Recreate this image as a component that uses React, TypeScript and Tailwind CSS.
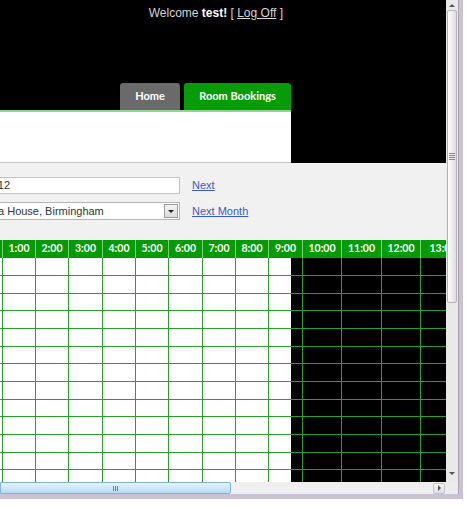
import React from 'react';

const hours = ['0:00', '1:00', '2:00', '3:00', '4:00', '5:00', '6:00', '7:00', '8:00', '9:00', '10:00', '11:00', '12:00', '13:00'];
const rowHeights = ['h-[18px]', 'h-[18px]', 'h-[17px]', 'h-[18px]', 'h-[18px]', 'h-[17px]', 'h-[18px]', 'h-[18px]', 'h-[17px]', 'h-[18px]', 'h-[18px]', 'h-[17px]', 'h-[18px]'];

function Timetable() {
  return (
    <div className="-ml-[30px] grid w-max grid-cols-[33px_33px_33px_34px_33px_33px_34px_33px_33px_34px_39px_40px_39px_45px]">
      {/* hour header */}
      {hours.map((h) => (
        <div
          key={h}
          className="flex h-[18px] items-center justify-center border-r border-[#7ccf7c] bg-[#049b04] font-['Lato',sans-serif] text-[10.5px] font-bold text-white"
        >
          {h}
        </div>
      ))}
      {/* empty booking slots */}
      {rowHeights.map((rh, r) =>
        hours.map((h) => (
          <div key={`${r}-${h}`} className={`${rh} border-r border-b border-[#2a9e2a]`} />
        ))
      )}
    </div>
  );
}

function VScrollbar() {
  return (
    <div className="flex h-[482px] w-[12px] flex-col bg-[#e9e9e9]">
      <div className="flex h-[10px] items-center justify-center">
        <div className="h-0 w-0 border-x-[3px] border-b-[3px] border-x-transparent border-b-[#555]" />
      </div>
      <div className="mx-[1px] flex h-[293px] items-center justify-center rounded-[2px] border border-[#b4b4b4] bg-gradient-to-r from-[#fdfdfd] to-[#dcdcdc]">
        <div className="flex flex-col gap-[1px]">
          <div className="h-[1px] w-[6px] bg-[#8a8a8a]" />
          <div className="h-[1px] w-[6px] bg-[#8a8a8a]" />
          <div className="h-[1px] w-[6px] bg-[#8a8a8a]" />
          <div className="h-[1px] w-[6px] bg-[#8a8a8a]" />
        </div>
      </div>
      <div className="flex-1" />
      <div className="flex h-[14px] items-center justify-center pb-[4px]">
        <div className="h-0 w-0 border-x-[3px] border-t-[3px] border-x-transparent border-t-[#555]" />
      </div>
    </div>
  );
}

function HScrollbar() {
  return (
    <div className="flex h-[12px] w-[446px] items-center bg-[#efefef]">
      <div className="flex h-[12px] w-[231px] items-center justify-center rounded-r-[2px] border border-[#7fb2d8] bg-gradient-to-b from-[#e6f3fc] to-[#b7daf2]">
        <div className="flex gap-[1px]">
          <div className="h-[5px] w-[1px] bg-[#5b86a8]" />
          <div className="h-[5px] w-[1px] bg-[#5b86a8]" />
          <div className="h-[5px] w-[1px] bg-[#5b86a8]" />
        </div>
      </div>
      <div className="flex-1" />
      <div className="mr-[1px] flex h-[11px] w-[12px] items-center justify-center rounded-[2px] border border-[#c4c4c4] bg-gradient-to-b from-[#f7f7f7] to-[#dedede]">
        <div className="h-0 w-0 border-y-[3px] border-l-[3px] border-y-transparent border-l-[#555]" />
      </div>
    </div>
  );
}

export default function App() {
  return (
    <div className="h-[507px] w-[474px] overflow-hidden bg-white">
      {/* browser window frame */}
      <div className="flex w-[463px] flex-col border-b-[5px] border-[#c8c2d4]">
        <div className="flex">
          <div className="flex w-[446px] flex-col">
            {/* page viewport (scrolled sideways) */}
            <div className="h-[482px] w-[446px] overflow-hidden bg-black">
              {/* header */}
              <div className="flex h-[110px] w-[291px] flex-col">
                <div className="pt-[6px] pr-[8px] text-right font-['Liberation_Sans',sans-serif] text-[12px] leading-[15px] text-[#d6d6d6]">
                  Welcome <b className="text-white">test!</b> [ <span className="underline">Log Off</span> ]
                </div>
                <div className="mt-auto flex justify-end gap-[4px] font-['Lato',sans-serif] text-[11px] font-bold text-white">
                  <div className="flex h-[27px] w-[60px] items-center justify-center rounded-t-[3px] bg-[#6a6a6a]">Home</div>
                  <div className="flex h-[27px] w-[107px] items-center justify-center rounded-t-[3px] bg-[#069c06]">Room Bookings</div>
                </div>
              </div>

              {/* main content panel */}
              <div className="h-[372px] w-[291px] border-t-2 border-[#8fd58f] bg-white">
                <div className="h-[51px] border-b border-[#c6c6c6]" />
                <div className="flex h-[77px] w-[446px] flex-col gap-[8px] bg-[#f1f1f1] pt-[14px] font-['Liberation_Sans',sans-serif] text-[11px]">
                  <div className="flex items-center gap-[12px]">
                    <div className="-ml-[49px] flex h-[17px] w-[229px] items-center border border-[#c3c3c3] bg-white pl-[3px] text-[#333]">
                      01/06/2012
                    </div>
                    <a className="text-[#3b5bd0] underline">Next</a>
                  </div>
                  <div className="flex items-center gap-[12px]">
                    <div className="-ml-[49px] flex h-[18px] w-[229px] items-center border border-[#b5b5b5] bg-white pl-[13px] pr-[1px] text-[#333]">
                      <span className="flex-1">Kinetica House, Birmingham</span>
                      <div className="flex h-[14px] w-[14px] items-center justify-center border border-[#9c9c9c] bg-gradient-to-b from-[#f6f6f6] to-[#dadada]">
                        <div className="h-0 w-0 border-x-[3px] border-t-[3px] border-x-transparent border-t-[#222]" />
                      </div>
                    </div>
                    <a className="text-[#3b5bd0] underline">Next Month</a>
                  </div>
                </div>
                <Timetable />
              </div>
            </div>
            <HScrollbar />
          </div>
          <div className="flex flex-col">
            <VScrollbar />
            <div className="h-[12px] w-[12px] bg-[#ececec]" />
          </div>
          <div className="w-[5px] border-l border-[#a49eb0] bg-[#c8c2d4]" />
        </div>
      </div>
    </div>
  );
}
